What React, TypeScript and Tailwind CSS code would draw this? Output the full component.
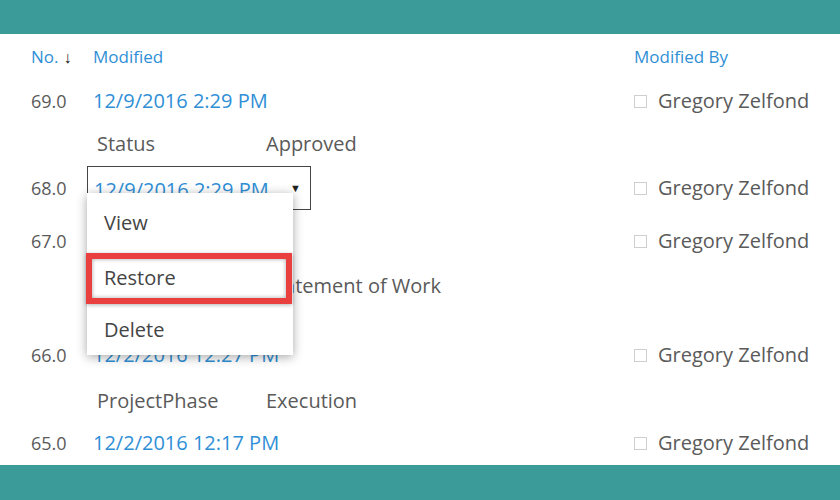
import React from "react";

type Row =
  | { kind: "version"; no: string; date: string; by: string; h: string; boxed?: boolean }
  | { kind: "prop"; label: string; value: string; h: string };

const rows: Row[] = [
  { kind: "version", no: "69.0", date: "12/9/2016 2:29 PM", by: "Gregory Zelfond", h: "h-[42px]" },
  { kind: "prop", label: "Status", value: "Approved", h: "h-[44px]" },
  { kind: "version", no: "68.0", date: "12/9/2016 2:29 PM", by: "Gregory Zelfond", h: "h-[44px]", boxed: true },
  { kind: "version", no: "67.0", date: "12/9/2016 2:28 PM", by: "Gregory Zelfond", h: "h-[62px]" },
  { kind: "prop", label: "Title", value: "Statement of Work", h: "h-[28px]" },
  { kind: "prop", label: "", value: "", h: "h-[34px]" },
  { kind: "version", no: "66.0", date: "12/2/2016 12:27 PM", by: "Gregory Zelfond", h: "h-[42px]" },
  { kind: "prop", label: "ProjectPhase", value: "Execution", h: "h-[50px]" },
  { kind: "version", no: "65.0", date: "12/2/2016 12:17 PM", by: "Gregory Zelfond", h: "h-[34px]" },
];

function ModifiedBy({ name }: { name: string }) {
  return (
    <div className="flex items-center">
      <span className="w-[13px] h-[13px] border border-[#cfcfcf] mr-[11px]" />
      <span className="text-[20px] text-[#5a5a5a]">{name}</span>
    </div>
  );
}

export default function App() {
  return (
    <div
      className="w-[840px] h-[500px] bg-white flex flex-col overflow-hidden relative"
      style={{ fontFamily: '"Open Sans", "Noto Sans", sans-serif' }}
    >
      <div className="h-[34px] bg-[#3b9b99] shrink-0" />

      <div className="flex-1 flex flex-col">
        {/* column headers */}
        <div className="h-[46px] flex items-center text-[17px] text-[#2f8fd6]">
          <div className="w-[93px] pl-[31px] flex items-center">
            No.
            <span className="ml-[5px] text-[#222] text-[16px] font-bold">↓</span>
          </div>
          <div className="w-[541px]">Modified</div>
          <div>Modified By</div>
        </div>

        {rows.map((r, i) =>
          r.kind === "version" ? (
            <div key={i} className={`${r.h} flex items-center`}>
              <div className="w-[87px] pl-[31px] text-[18px] text-[#5a5a5a]">{r.no}</div>
              <div className="w-[547px] flex items-center">
                {r.boxed ? (
                  <div className="w-[224px] h-[44px] border border-[#444] flex items-center pt-[4px] pl-[6px] pr-[9px] justify-between whitespace-nowrap">
                    <span className="text-[20px] text-[#2f8fd6]">{r.date}</span>
                    <span className="text-[11px] text-[#222] -mt-[4px]">▼</span>
                  </div>
                ) : (
                  <span className="pl-[6px] text-[20px] text-[#2f8fd6] whitespace-nowrap">{r.date}</span>
                )}
              </div>
              <ModifiedBy name={r.by} />
            </div>
          ) : (
            <div key={i} className={`${r.h} flex items-center text-[20px] text-[#5a5a5a]`}>
              <div className="w-[97px]" />
              <div className="w-[169px]">{r.label}</div>
              <div>{r.value}</div>
            </div>
          )
        )}
      </div>

      <div className="h-[35px] bg-[#3b9b99] shrink-0" />

      {/* context menu for version 68.0 */}
      <div className="absolute left-[87px] top-[193px] w-[206px] h-[162px] bg-white shadow-[0_2px_10px_rgba(0,0,0,0.35)] flex flex-col text-[20px] text-[#444]">
        <div className="h-[59px] flex items-center pl-[17px]">View</div>
        <div className="h-[52px] flex items-center pl-[17px]">Restore</div>
        <div className="h-[51px] flex items-center pl-[17px]">Delete</div>
      </div>
      <div className="absolute left-[86px] top-[253px] w-[206px] h-[51px] border-[6px] border-[#e9403f] shadow-[inset_0_0_4px_rgba(0,0,0,0.35),0_1px_4px_rgba(0,0,0,0.3)]" />
    </div>
  );
}
